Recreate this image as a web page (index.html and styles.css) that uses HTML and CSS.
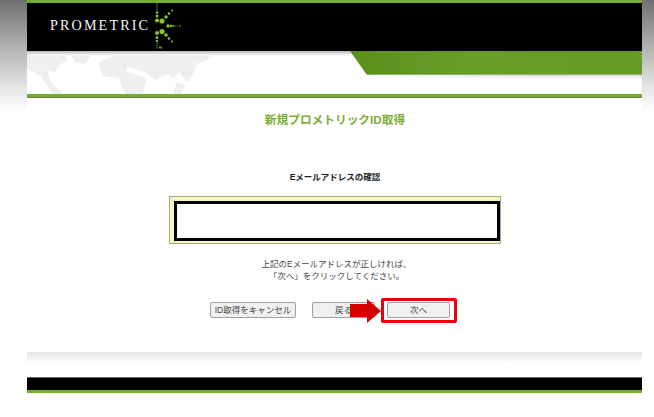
FILE: index.html
```html
<!DOCTYPE html>
<html lang="ja">
<head>
<meta charset="utf-8">
<title>新規プロメトリックID取得</title>
<link rel="stylesheet" href="styles.css">
</head>
<body>
<div class="page">
  <div class="shell">
    <header class="masthead">
      <span class="brand">PROMETRIC</span>
      <svg class="star" width="34" height="48" viewBox="0 0 34 48" fill="#86c232">
        <g fill="#5f9222">
          <rect x="6.500" y="0" width="1" height="1.500"/><rect x="6.500" y="2" width="1" height="1.500"/><rect x="6.500" y="4" width="1" height="1.500"/><rect x="6.500" y="6" width="1" height="1.500"/>
          <rect x="6.500" y="40" width="1" height="1.500"/><rect x="6.500" y="42" width="1" height="1.500"/><rect x="6.500" y="44" width="1" height="1.500"/>
          <rect x="25" y="22.500" width="1.200" height="1"/><rect x="27" y="22.500" width="1.200" height="1"/><rect x="29" y="22.500" width="2" height="1"/>
          <rect x="9" y="43.500" width="3" height="2"/>
        </g>
        <circle cx="7" cy="9.500" r="1.200"/><circle cx="7" cy="13" r="1.500"/><circle cx="7" cy="17.500" r="2"/>
        <circle cx="7" cy="30" r="2"/><circle cx="7" cy="34.500" r="1.500"/><circle cx="7" cy="38" r="1.200"/>
        <circle cx="12" cy="18" r="2.600"/><circle cx="16" cy="14" r="1.800"/><circle cx="19" cy="10.500" r="1.300"/><circle cx="22" cy="7.500" r="1"/>
        <circle cx="12" cy="28.500" r="2.600"/><circle cx="16" cy="32" r="1.800"/><circle cx="19" cy="35.500" r="1.300"/><circle cx="22" cy="38.500" r="1"/>
        <circle cx="18" cy="23" r="1.700"/><circle cx="21" cy="23" r="1.300"/><circle cx="23.500" cy="23" r="1"/>
      </svg>
    </header>
    <div class="banner">
      <svg class="map" width="200" height="42" viewBox="0 0 200 42">
        <defs>
          <pattern id="dots" width="2" height="2" patternUnits="userSpaceOnUse">
            <rect width="2" height="2" fill="#f1f1f1"/>
            <rect width="1" height="1" fill="#e9e9e9"/>
          </pattern>
        </defs>
        <g fill="url(#dots)">
          <path d="M0 3H38L40 9L32 13L28 20L20 18L24 30L36 42H26L14 24L0 16Z"/>
          <path d="M44 3H64L58 12L48 10Z"/>
          <path d="M72 10L88 3H135L175 3L186 5L170 12L166 22L160 30L152 20L146 27L142 22L128 28L118 20L100 14L100 20L120 26L116 42H98L92 26L76 24L72 14Z"/>
          <path d="M150 30L158 33L154 42H146Z"/>
        </g>
      </svg>
      <div class="wedge-shadow"></div>
      <div class="wedge"></div>
    </div>
    <main class="content">
      <h1 class="title">新規プロメトリックID取得</h1>
      <h2 class="subtitle">Eメールアドレスの確認</h2>
      <div class="frame"><div class="email"></div></div>
      <p class="note">上記のEメールアドレスが正しければ、<br>「次へ」をクリックしてください。</p>
      <div class="actions">
        <button class="btn btn-cancel" type="button">ID取得をキャンセル</button>
        <button class="btn btn-back" type="button">戻る</button>
        <span class="next-wrap">
          <button class="btn btn-next" type="button">次へ</button>
          <svg class="arrow" width="31" height="24" viewBox="0 0 31 24"><path d="M0 5H17V0L31 12L17 24V18H0Z" fill="#d40000"/></svg>
        </span>
      </div>
    </main>
    <div class="fade"></div>
    <footer class="foot"></footer>
  </div>
</div>
</body>
</html>
```
FILE: styles.css
```css
* { box-sizing: border-box; }
html, body { margin: 0; padding: 0; }
body {
  background: #fff;
  font-family: "Liberation Sans", "Noto Sans CJK JP", sans-serif;
  overflow: hidden;
}
.page {
  height: 417px;
  padding: 0 12px 0 27px;
  background: linear-gradient(to bottom, #707070 0, #a8a8a8 40px, #e2e2e2 85px, #fff 112px) no-repeat;
  background-size: 100% 112px;
}
.shell { width: 615px; background: #fff; }
.masthead {
  height: 51px;
  background: #000;
  border-top: 3px solid #74ad2b;
  display: flex;
  align-items: flex-start;
  padding-left: 23px;
}
.brand {
  font-family: "Liberation Serif", serif;
  font-size: 14.200px;
  letter-spacing: 2.100px;
  color: #f4f4f4;
  line-height: 15px;
  margin-top: 15px;
  width: 100px;
  white-space: nowrap;
}
.star { display: block; }
.banner {
  position: relative;
  height: 46px;
  background: linear-gradient(to bottom, #b5b5b5 0, #e6e6e6 3px, #fff 5px);
  border-bottom: 3px solid #74ad2b;
  box-shadow: 0 1px 0 #6b7f55;
  overflow: hidden;
}
.map { position: absolute; left: 0; top: 1px; }
.wedge-shadow {
  position: absolute;
  right: 0;
  top: 24px;
  width: 275px;
  height: 4px;
  background: linear-gradient(to bottom, #d8d8d8, #fff);
  -webkit-mask-image: linear-gradient(to right, transparent, #000 60%);
  mask-image: linear-gradient(to right, transparent, #000 60%);
}
.wedge {
  position: absolute;
  right: 0;
  top: 0;
  width: 292px;
  height: 24px;
  background: linear-gradient(to right, #5a8f1c, #6a9c2a 40%, #689a28);
  border-bottom: 1px solid #8cb858;
  clip-path: polygon(0 0, 100% 0, 100% 100%, 17px 100%);
}
.content {
  height: 255px;
  text-align: center;
  color: #222;
  padding-top: 15px;
}
.title {
  margin: 0;
  font-size: 11.700px;
  line-height: 16px;
  font-weight: bold;
  color: #7cae35;
  padding-left: 1px;
}
.subtitle {
  margin: 43px 0 0;
  font-size: 8.500px;
  line-height: 12px;
  font-weight: bold;
  color: #222;
  padding-left: 1px;
}
.frame {
  width: 332px;
  height: 48px;
  margin: 13px auto 0;
  padding: 2px;
  background: #f6f6c4;
  border: 1px solid #a8a87c;
}
.email {
  width: 326px;
  height: 40px;
  margin: 2px 0 0 2px;
  background: #fff;
  border: 3px solid #000;
}
.note {
  margin: 14px 0 0;
  font-size: 8.500px;
  line-height: 12px;
  color: #444;
  padding-left: 4px;
}
.actions {
  display: flex;
  margin: 15px 0 0 183px;
  align-items: center;
}
.btn {
  height: 16px;
  padding: 0;
  font-family: inherit;
  font-size: 8.500px;
  line-height: 12px;
  color: #444;
  background: #f0f0f0;
  border: 1px solid #a0a0a0;
  border-radius: 2px;
  white-space: nowrap;
}
.btn-cancel { width: 86px; }
.btn-back { width: 63px; margin-left: 16px; }
.next-wrap {
  position: relative;
  margin-left: 6px;
  width: 76px;
  height: 25px;
  border: 3px solid #e8000b;
  border-radius: 2px;
  padding: 1px 3px;
  margin-top: 1px;
  background: #fff;
}
.btn-next { display: block; width: 63px; }
.arrow { position: absolute; left: -34px; top: -2px; }
.fade {
  height: 25px;
  background: linear-gradient(to bottom, #e4e4e4 0, #f8f8f8 8px, #fff 12px);
}
.foot {
  height: 16px;
  background: #000;
  border-top: 1px solid #666;
  border-bottom: 3px solid #74ad2b;
}
```
